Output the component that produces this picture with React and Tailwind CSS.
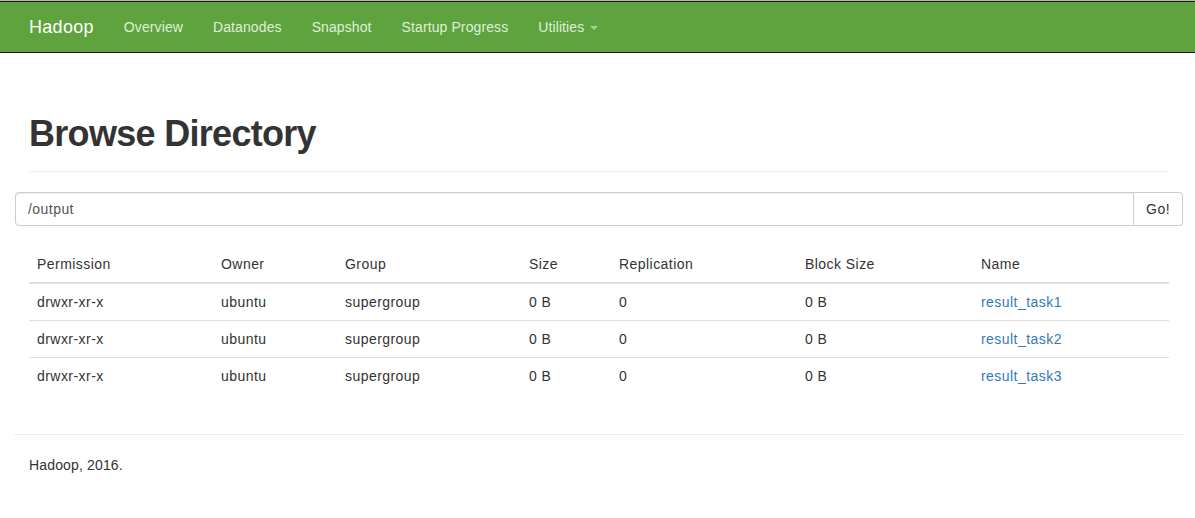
import React from 'react';

const rows = [
    { perm: "drwxr-xr-x", owner: "ubuntu", group: "supergroup", size: "0 B", repl: "0", block: "0 B", name: "result_task1" },
    { perm: "drwxr-xr-x", owner: "ubuntu", group: "supergroup", size: "0 B", repl: "0", block: "0 B", name: "result_task2" },
    { perm: "drwxr-xr-x", owner: "ubuntu", group: "supergroup", size: "0 B", repl: "0", block: "0 B", name: "result_task3" },
];

const navLinks = ["Overview", "Datanodes", "Snapshot", "Startup Progress"];

export default function App() {
    return (
        <div className="min-h-[518px] bg-white text-[14px] text-[#333] tracking-[0.45px]" style={{ fontFamily: '"Liberation Sans", Arial, sans-serif' }}>
            {/* navbar */}
            <div className="h-px bg-[#b5b5b5]"></div>
            <nav className="h-[52px] bg-[#5fa33e] border-y border-[#1c1c1c]">
                <div className="ml-[14px] w-[1170px] flex items-center h-[50px]">
                    <a className="px-[15px] text-[18px] text-white leading-[50px] tracking-[0.3px]">Hadoop</a>
                    {navLinks.map((l) => (
                        <a key={l} className="px-[15px] text-[#dff0d8] leading-[50px] tracking-[0.1px]">{l}</a>
                    ))}
                    <a className="px-[15px] text-[#dff0d8] leading-[50px] tracking-[0.1px] flex items-center">
                        Utilities
                        <span className="ml-[6px] mt-[2px] w-0 h-0 border-x-[4px] border-x-transparent border-t-[4px] border-t-[#a9cf96]"></span>
                    </a>
                </div>
            </nav>

            <div className="ml-[14px] w-[1170px] px-[15px]">
                <div className="mt-[61px] pb-[17px] border-b border-[#eee]">
                    <h1 className="text-[36px] leading-[40px] font-bold tracking-[-0.7px] text-[#333]">Browse Directory</h1>
                </div>

                <div className="mt-[20px] -ml-[14px] -mr-[14px] flex h-[34px]">
                    <div className="flex-1 border border-[#ccc] rounded-l-[4px] px-[12px] flex items-center text-[#555] shadow-[inset_0_1px_1px_rgba(0,0,0,0.075)]">
                        /output
                    </div>
                    <button className="border border-l-0 border-[#ccc] rounded-r-[4px] px-[12px] bg-white text-[#333]">Go!</button>
                </div>

                <table className="mt-[20px] w-full border-collapse text-left leading-[20px]">
                    <colgroup>
                        <col className="w-[184px]" />
                        <col className="w-[124px]" />
                        <col className="w-[184px]" />
                        <col className="w-[90px]" />
                        <col className="w-[186px]" />
                        <col className="w-[176px]" />
                        <col />
                    </colgroup>
                    <thead>
                        <tr className="border-b-2 border-[#ddd]">
                            {["Permission", "Owner", "Group", "Size", "Replication", "Block Size", "Name"].map((h) => (
                                <th key={h} className="p-[8px] font-normal">{h}</th>
                            ))}
                        </tr>
                    </thead>
                    <tbody>
                        {rows.map((r, i) => (
                            <tr key={r.name} className={i > 0 ? "border-t border-[#ddd]" : ""}>
                                <td className="p-[8px]">{r.perm}</td>
                                <td className="p-[8px]">{r.owner}</td>
                                <td className="p-[8px]">{r.group}</td>
                                <td className="p-[8px]">{r.size}</td>
                                <td className="p-[8px]">{r.repl}</td>
                                <td className="p-[8px]">{r.block}</td>
                                <td className="p-[8px]"><a className="text-[#337ab7]">{r.name}</a></td>
                            </tr>
                        ))}
                    </tbody>
                </table>

                <hr className="mt-[40px] -mx-[15px] border-0 border-t border-[#eee]" />
                <p className="mt-[20px] leading-[20px] tracking-[0.15px]">Hadoop, 2016.</p>
            </div>
        </div>
    );
}
